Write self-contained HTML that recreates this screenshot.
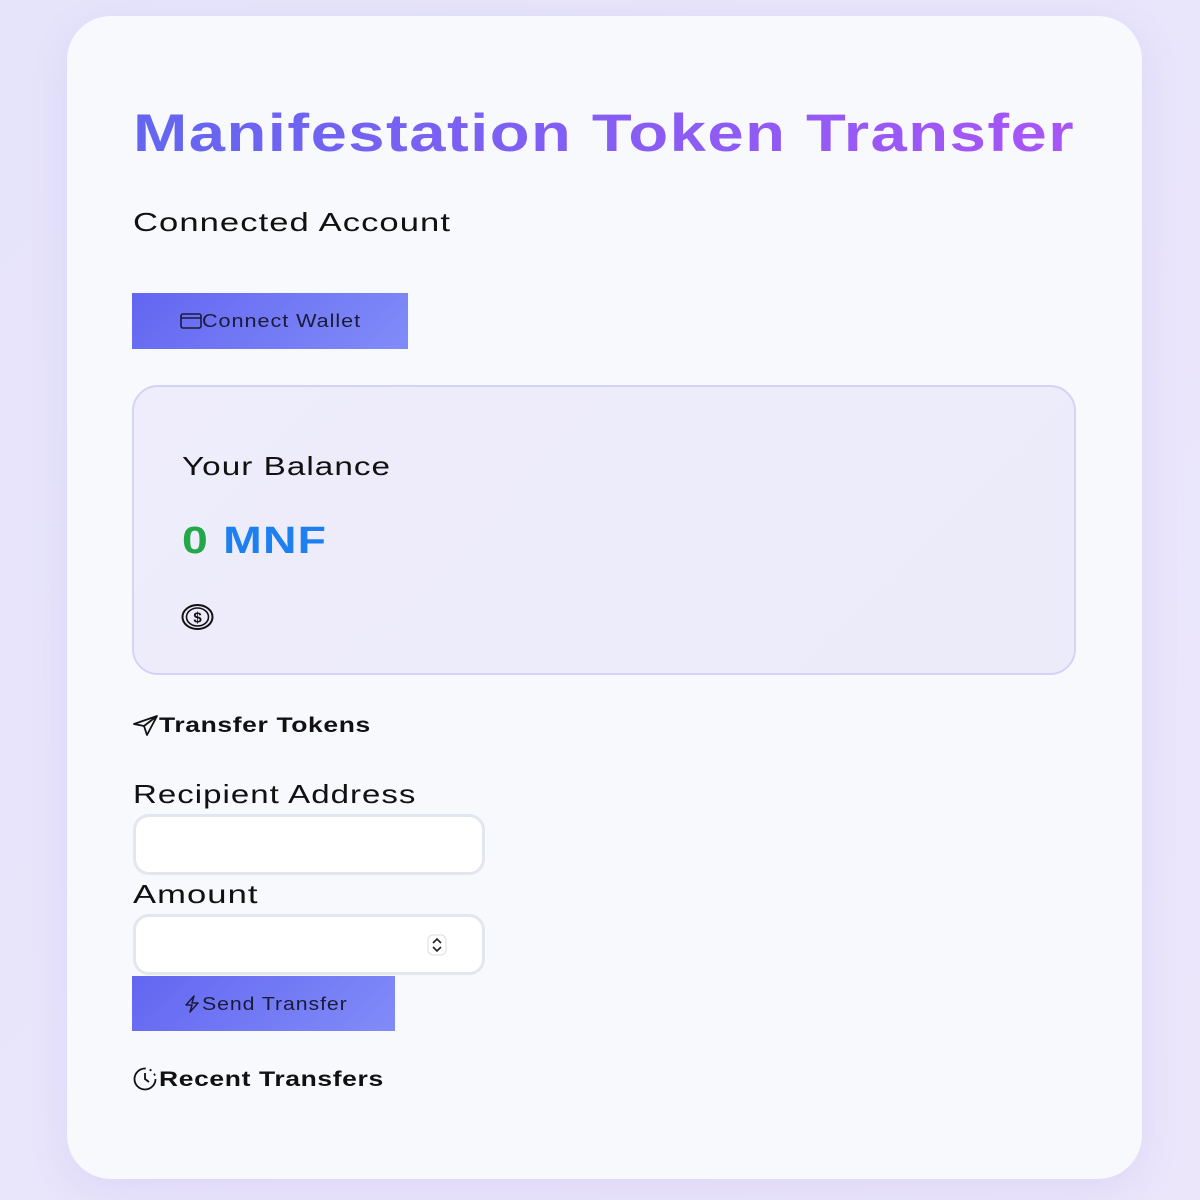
<!DOCTYPE html>
<html><head><meta charset="utf-8"><style>
*{box-sizing:border-box;margin:0;padding:0}
body{width:1200px;height:1200px;overflow:hidden;background:linear-gradient(135deg,#e6e4fb,#ece6fb);font-family:"Liberation Sans",sans-serif;color:#111;position:relative}
.card{position:absolute;left:67px;top:16px;width:1075px;height:1163px;background:#f8f9fc;border-radius:44px;box-shadow:0 10px 40px rgba(120,110,220,.12)}
.abs{position:absolute;white-space:nowrap}
.s{display:inline-block;transform-origin:left center}
h1{position:absolute;left:133px;top:103px;font-size:53px;font-weight:bold;letter-spacing:1.2px;white-space:nowrap;transform:scaleX(1.23);transform-origin:left center}
h1 span{background:linear-gradient(90deg,#6366f1,#a855f7);-webkit-background-clip:text;background-clip:text;color:transparent}
.btn{position:absolute;background:linear-gradient(135deg,#6366f1,#818cf8);color:#1a1a3a;font-size:18px;letter-spacing:.8px}
.bal{position:absolute;left:132px;top:385px;width:944px;height:290px;border:2px solid #d4d2f7;border-radius:26px;background:linear-gradient(135deg,#efedfb,#ebebfa)}
.inp{position:absolute;left:133px;width:352px;height:61px;border:3px solid #e2e6ee;border-radius:16px;background:#fff}
</style></head><body>
<div class="card"></div>
<h1><span>Manifestation Token Transfer</span></h1>
<div class="abs" style="left:133px;top:207px;font-size:26px;letter-spacing:.8px"><span class="s" style="transform:scaleX(1.33)">Connected Account</span></div>
<div class="btn" style="left:132px;top:293px;width:276px;height:56px">
<svg class="abs" style="left:48px;top:20px" width="22" height="16" viewBox="0 0 22 16"><rect x="1" y="1" width="20" height="14" rx="2" fill="none" stroke="#1a1a3a" stroke-width="1.6"/><line x1="1" y1="5" x2="21" y2="5" stroke="#1a1a3a" stroke-width="1.6"/></svg>
<span class="abs s" style="left:70px;top:18px;transform:scaleX(1.2)">Connect Wallet</span></div>
<div class="bal"></div>
<div class="abs" style="left:182px;top:451px;font-size:26px;letter-spacing:.8px"><span class="s" style="transform:scaleX(1.28)">Your Balance</span></div>
<div class="abs" style="left:182px;top:520px;font-size:38px;font-weight:bold;letter-spacing:1px"><span class="s" style="transform:scaleX(1.22)"><span style="color:#22a84a">0</span> <span style="color:#1e7ff0">MNF</span></span></div>
<svg class="abs" style="left:181px;top:603px" width="33" height="28" viewBox="0 0 33 28"><ellipse cx="16.5" cy="14" rx="15" ry="12" fill="none" stroke="#111" stroke-width="2"/><ellipse cx="16.5" cy="14" rx="11" ry="9" fill="none" stroke="#111" stroke-width="1.6"/><text x="16.5" y="19.5" text-anchor="middle" font-size="15" font-family="Liberation Sans" font-weight="bold" fill="#111">$</text></svg>
<svg class="abs" style="left:132px;top:714px" width="27" height="22" viewBox="0 0 27 22"><path d="M2 10 L25 2 L15 21 L12 12 Z M12 12 L25 2" fill="none" stroke="#111" stroke-width="1.8" stroke-linejoin="round"/></svg>
<div class="abs" style="left:159px;top:714px;font-size:21px;font-weight:bold;letter-spacing:.5px"><span class="s" style="transform:scaleX(1.26)">Transfer Tokens</span></div>
<div class="abs" style="left:133px;top:779px;font-size:26px;letter-spacing:.8px"><span class="s" style="transform:scaleX(1.27)">Recipient Address</span></div>
<div class="inp" style="top:814px"></div>
<div class="abs" style="left:133px;top:879px;font-size:26px;letter-spacing:.8px"><span class="s" style="transform:scaleX(1.33)">Amount</span></div>
<div class="inp" style="top:914px"></div>
<svg class="abs" style="left:427px;top:934px" width="20" height="22" viewBox="0 0 20 22"><rect x="1" y="1" width="18" height="20" rx="5" fill="#fff" stroke="#ddd"/><path d="M6 9 L10 5 L14 9 M6 13 L10 17 L14 13" fill="none" stroke="#222" stroke-width="1.6"/></svg>
<div class="btn" style="left:132px;top:976px;width:263px;height:55px">
<svg class="abs" style="left:50px;top:18px" width="20" height="20" viewBox="0 0 20 20"><path d="M12 2 L4 11 H10 L8 18 L16 9 H10 Z" fill="none" stroke="#1a1a3a" stroke-width="1.5" stroke-linejoin="round"/></svg>
<span class="abs s" style="left:70px;top:18px;transform:scaleX(1.18)">Send Transfer</span></div>
<svg class="abs" style="left:132px;top:1067px" width="26" height="24" viewBox="0 0 26 24"><circle cx="13" cy="12" r="10.5" fill="none" stroke="#111" stroke-width="1.8" stroke-dasharray="50 4 2 4 2 4"/><path d="M13 6 V12 L17 15" fill="none" stroke="#111" stroke-width="1.8"/></svg>
<div class="abs" style="left:159px;top:1068px;font-size:21px;font-weight:bold;letter-spacing:.5px"><span class="s" style="transform:scaleX(1.26)">Recent Transfers</span></div>
</body></html>
